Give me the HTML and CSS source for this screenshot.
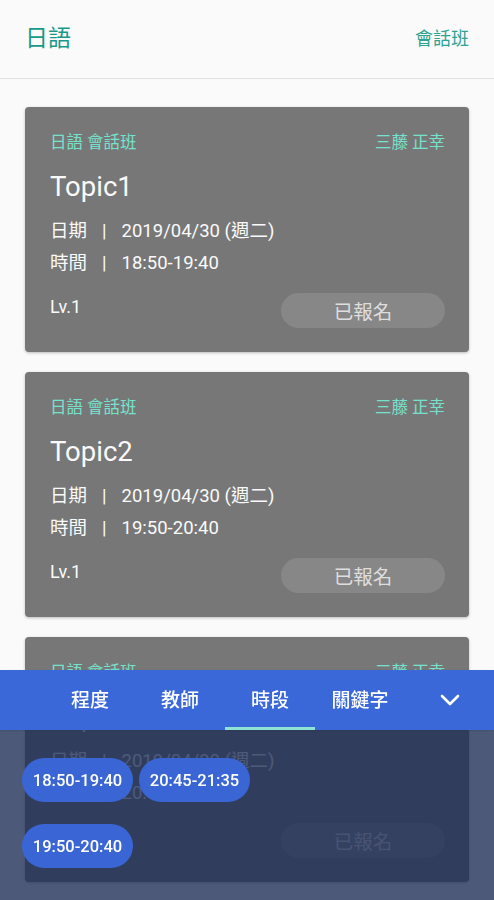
FILE: index.html
```html
<!DOCTYPE html>
<html lang="zh-Hant">
<head>
<meta charset="utf-8">
<title>日語 會話班</title>
<link rel="stylesheet" href="styles.css">
</head>
<body>
<header class="topbar">
  <h1 class="topbar-title">日語</h1>
  <span class="topbar-sub">會話班</span>
</header>

<main class="list">
  <article class="card">
    <div class="card-meta"><span>日語 會話班</span><span>三藤 正幸</span></div>
    <h2 class="card-title">Topic1</h2>
    <div class="card-row"><span class="label">日期</span><span class="sep">|</span><span>2019/04/30 (週二)</span></div>
    <div class="card-row"><span class="label">時間</span><span class="sep">|</span><span>18:50-19:40</span></div>
    <div class="card-foot"><span class="level">Lv.1</span><button class="btn-done">已報名</button></div>
  </article>
  <article class="card">
    <div class="card-meta"><span>日語 會話班</span><span>三藤 正幸</span></div>
    <h2 class="card-title">Topic2</h2>
    <div class="card-row"><span class="label">日期</span><span class="sep">|</span><span>2019/04/30 (週二)</span></div>
    <div class="card-row"><span class="label">時間</span><span class="sep">|</span><span>19:50-20:40</span></div>
    <div class="card-foot"><span class="level">Lv.1</span><button class="btn-done">已報名</button></div>
  </article>
  <article class="card">
    <div class="card-meta"><span>日語 會話班</span><span>三藤 正幸</span></div>
    <h2 class="card-title">Topic3</h2>
    <div class="card-row"><span class="label">日期</span><span class="sep">|</span><span>2019/04/30 (週二)</span></div>
    <div class="card-row"><span class="label">時間</span><span class="sep">|</span><span>20:45-21:35</span></div>
    <div class="card-foot"><span class="level">Lv.1</span><button class="btn-done">已報名</button></div>
  </article>
</main>

<div class="filter">
  <nav class="filter-bar">
    <span class="tab">程度</span>
    <span class="tab">教師</span>
    <span class="tab tab-active">時段</span>
    <span class="tab">關鍵字</span>
    <span class="tab-toggle">
      <svg width="20" height="12" viewBox="0 0 20 12"><path d="M2 2 L10 10 L18 2" fill="none" stroke="#fff" stroke-width="2.6" stroke-linecap="round" stroke-linejoin="round"/></svg>
    </span>
  </nav>
  <div class="filter-panel">
    <div class="chip-row">
      <span class="chip">18:50-19:40</span>
      <span class="chip">20:45-21:35</span>
    </div>
    <div class="chip-row">
      <span class="chip">19:50-20:40</span>
    </div>
  </div>
</div>
</body>
</html>
```

FILE: styles.css
```css
* { box-sizing: border-box; }
html, body { margin: 0; padding: 0; }
body {
  background: #fafafa;
  font-family: Roboto, "Noto Sans CJK TC", "Noto Sans", sans-serif;
  width: 494px;
  height: 900px;
  overflow: hidden;
}
.topbar {
  height: 79px;
  border-bottom: 1px solid #e2e2e2;
  display: flex;
  align-items: center;
  justify-content: space-between;
  padding: 0 25px 0 25px;
  background: #fafafa;
}
.topbar-title {
  margin: 0;
  font-size: 23px;
  font-weight: 400;
  color: #19998a;
  line-height: 30px;
}
.topbar-sub {
  font-size: 18px;
  color: #2ea393;
  line-height: 24px;
}
.list {
  padding: 28px 25px 0 25px;
  display: flex;
  flex-direction: column;
  gap: 20px;
}
.card {
  background: #777777;
  border-radius: 4px;
  box-shadow: 0 1px 3px rgba(0,0,0,0.25);
  padding: 26px 24px 24px 25px;
  color: #fff;
}
.card-meta {
  display: flex;
  justify-content: space-between;
  font-size: 16.5px;
  line-height: 20px;
  color: #76e2cb;
}
.card-title {
  margin: 17px 0 11px 0;
  font-size: 27.5px;
  line-height: 34px;
  font-weight: 400;
  color: #fafafa;
}
.card-row {
  display: flex;
  font-size: 18.5px;
  line-height: 32px;
  color: #fafafa;
}
.sep { margin: 0 15px 0 15px; }
.card-foot {
  margin-top: 14px;
  display: flex;
  justify-content: space-between;
  align-items: flex-start;
}
.level {
  font-size: 18px;
  line-height: 28px;
  color: #fafafa;
}
.btn-done {
  width: 164px;
  height: 35px;
  border: none;
  border-radius: 18px;
  background: #878787;
  color: #dedede;
  font-family: inherit;
  font-size: 19.5px;
  padding: 0;
}
.filter {
  position: fixed;
  left: 0;
  right: 0;
  top: 670px;
  bottom: 0;
  display: flex;
  flex-direction: column;
}
.filter-bar {
  height: 60px;
  background: #3a68d8;
  display: flex;
  padding-left: 45px;
  box-shadow: 0 1px 2px rgba(0,0,0,0.2);
}
.tab {
  width: 90px;
  display: flex;
  align-items: center;
  justify-content: center;
  color: #fff;
  font-size: 19px;
  font-weight: 500;
  border-bottom: 3px solid transparent;
}
.tab-active { border-bottom-color: #8fe3d2; }
.tab-toggle {
  flex: 1;
  display: flex;
  align-items: center;
  justify-content: center;
}
.filter-panel {
  flex: 1;
  background: rgba(30, 46, 86, 0.79);
  padding: 28px 22px 0 22px;
  display: flex;
  flex-direction: column;
  gap: 22px;
}
.chip-row {
  display: flex;
  gap: 6px;
}
.chip {
  height: 44px;
  width: 111px;
  border-radius: 22px;
  background: #3a65d5;
  color: #fff;
  font-size: 16.5px;
  font-weight: 500;
  display: flex;
  align-items: center;
  justify-content: center;
}
```
